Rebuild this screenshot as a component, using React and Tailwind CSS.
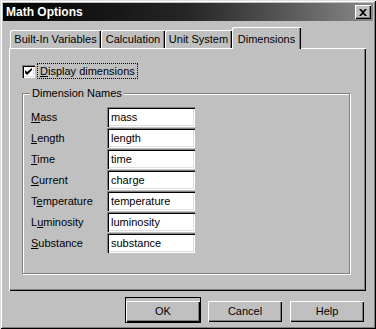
const raised = "shadow-[inset_1px_1px_0_#fff,inset_-1px_-1px_0_#000,inset_-2px_-2px_0_#808080]";
const sunken = "shadow-[inset_1px_1px_0_#808080,inset_2px_2px_0_#000,inset_-1px_-1px_0_#fff,inset_-2px_-2px_0_#dfdfdf]";

const fields = [
    { pre: "", key: "M", post: "ass", value: "mass" },
    { pre: "", key: "L", post: "ength", value: "length" },
    { pre: "", key: "T", post: "ime", value: "time" },
    { pre: "", key: "C", post: "urrent", value: "charge" },
    { pre: "T", key: "e", post: "mperature", value: "temperature" },
    { pre: "L", key: "u", post: "minosity", value: "luminosity" },
    { pre: "", key: "S", post: "ubstance", value: "substance" },
];

const tabs = [
    { label: "Built-In Variables", w: "w-[91px]" },
    { label: "Calculation", w: "w-[64px]" },
    { label: "Unit System", w: "w-[67px]" },
];

const Button = ({ children, isDefault }) => (
    <div className={isDefault ? "border border-black" : "border border-transparent"}>
        <button className={`w-[74px] h-[21px] bg-[#c0c0c0] text-[11px] text-black ${raised}`}>
            {children}
        </button>
    </div>
);

const App = () => {
    return (
        <div
            className="w-[376px] h-[329px] bg-[#c0c0c0] p-[3px] flex flex-col shadow-[inset_1px_1px_0_#dfdfdf,inset_-1px_-1px_0_#000,inset_2px_2px_0_#fff,inset_-2px_-2px_0_#808080] text-black"
            style={{ fontFamily: '"Liberation Sans", Arial, sans-serif' }}
        >
            {/* title bar */}
            <div className="h-[18px] flex items-center justify-between pl-[3px] pr-[2px] bg-gradient-to-r from-[#050505] via-[#262626] to-[#8a8a8a]">
                <span className="text-white font-bold text-[12px] leading-none">Math Options</span>
                <div className={`w-[16px] h-[14px] bg-[#c0c0c0] flex items-center justify-center ${raised}`}>
                    <svg width="8" height="7" viewBox="0 0 8 7">
                        <path d="M0 0h2l2 2 2-2h2L5 3.5 8 7H6L4 5 2 7H0l3-3.5z" fill="#000" />
                    </svg>
                </div>
            </div>

            {/* tabs */}
            <div className="mt-[6px] ml-[7px] flex items-end h-[21px]">
                {tabs.map((t) => (
                    <div
                        key={t.label}
                        className={`${t.w} h-[18px] flex items-center justify-center text-[11px] rounded-tl-[2px] shadow-[inset_1px_1px_0_#fff,inset_-1px_0_0_#000,inset_-2px_0_0_#808080]`}
                    >
                        {t.label}
                    </div>
                ))}
                <div className="relative z-10 w-[69px] h-[22px] -mb-[1px] bg-[#c0c0c0] flex items-start justify-center pt-[4px] text-[11px] rounded-tl-[2px] shadow-[inset_1px_1px_0_#fff,inset_-1px_0_0_#000,inset_-2px_0_0_#808080]">
                    Dimensions
                </div>
            </div>

            {/* panel */}
            <div className={`ml-[6px] w-[357px] h-[243px] flex flex-col pl-[13px] pt-[15px] ${raised}`}>
                <div className="flex items-center">
                    <div className={`w-[13px] h-[13px] bg-white flex items-center justify-center ${sunken}`}>
                        <svg width="7" height="7" viewBox="0 0 7 7">
                            <path d="M0 2v3l2 2 5-5V-0L2 4z" fill="#000" />
                        </svg>
                    </div>
                    <div className="ml-[2px] px-[2px] h-[16px] flex items-center border border-dotted border-black text-[11px]">
                        <span><span className="underline">D</span>isplay dimensions</span>
                    </div>
                </div>

                <div className="relative mt-[14px] w-[328px] h-[181px] border border-[#808080] shadow-[1px_1px_0_#fff,inset_1px_1px_0_#fff] flex flex-col gap-[1px] pt-[13px] pl-[8px]">
                    <span className="absolute left-[7px] -top-[7px] px-[2px] bg-[#c0c0c0] text-[11px] leading-[13px]">
                        Dimension Names
                    </span>
                    {fields.map((f) => (
                        <div key={f.value} className="flex items-center h-[20px]">
                            <span className="w-[76px] text-[11px]">
                                {f.pre}<span className="underline">{f.key}</span>{f.post}
                            </span>
                            <div className={`w-[88px] h-[20px] bg-white flex items-center pl-[4px] text-[11px] ${sunken}`}>
                                {f.value}
                            </div>
                        </div>
                    ))}
                </div>
            </div>

            {/* buttons */}
            <div className="mt-[6px] flex justify-end gap-[6px] pr-[8px]">
                <Button isDefault>OK</Button>
                <Button>Cancel</Button>
                <Button>Help</Button>
            </div>
        </div>
    );
};

export default App;
